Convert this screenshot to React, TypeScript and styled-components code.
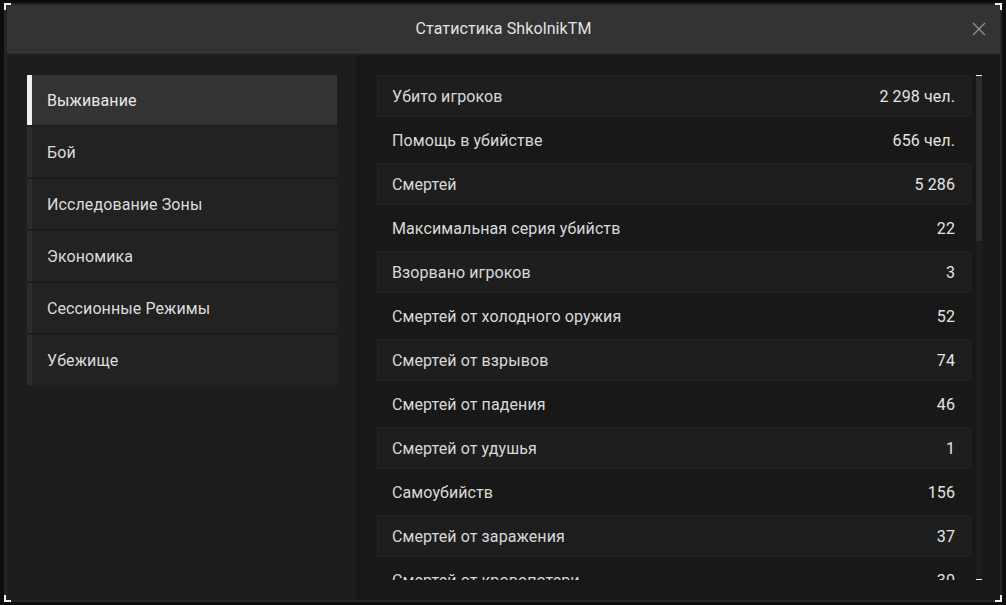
import React from "react";
import styled, { createGlobalStyle } from "styled-components";

const Global = createGlobalStyle`
  html, body { margin: 0; padding: 0; background: #0d0d0d; }
  body { font-family: Roboto, "Noto Sans", sans-serif; -webkit-font-smoothing: antialiased; }
  * { box-sizing: border-box; }
`;

const Page = styled.div`
  width: 1006px;
  height: 605px;
  padding: 3px 4px 3px 4px;
  background: #0d0d0d;
`;

const Frame = styled.div`
  position: relative;
  width: 998px;
  height: 599px;
  border: 2px solid #242424;
  border-left-width: 3px;
  background: #1c1c1c;
  display: flex;
  flex-direction: column;
`;

const Corner = styled.span<{ $pos: "tl" | "tr" | "bl" | "br" }>`
  position: absolute;
  width: 7px;
  height: 7px;
  border-color: #f2f2f2;
  border-style: solid;
  border-width: 0;
  ${(p) =>
    p.$pos === "tl"
      ? "top:-2px;left:-3px;border-top-width:2px;border-left-width:2px;"
      : p.$pos === "tr"
      ? "top:-2px;right:-2px;border-top-width:2px;border-right-width:2px;"
      : p.$pos === "bl"
      ? "bottom:-2px;left:-3px;border-bottom-width:2px;border-left-width:2px;"
      : "bottom:-2px;right:-2px;border-bottom-width:2px;border-right-width:2px;"}
`;

const Header = styled.div`
  position: relative;
  height: 48px;
  flex: none;
  background: #333333;
  border-bottom: 1px solid #3b3b3b;
  box-shadow: 0 2px 0 #262626;
  display: flex;
  align-items: center;
  justify-content: center;
`;

const Title = styled.div`
  color: #e2e2e2;
  font-size: 16px;
  letter-spacing: 0.1px;
`;

const Close = styled.button`
  position: absolute;
  right: 14px;
  top: 17px;
  width: 14px;
  height: 14px;
  padding: 0;
  border: 0;
  background: transparent;
  display: flex;
  cursor: pointer;
`;

const Body = styled.div`
  flex: 1;
  display: flex;
  margin-top: 2px;
  min-height: 0;
`;

const Side = styled.nav`
  width: 349px;
  flex: none;
  background: #1d1d1d;
  padding: 20px 19px 0 20px;
  display: flex;
  flex-direction: column;
  gap: 2px;
`;

const NavItem = styled.div<{ $active?: boolean }>`
  height: 50px;
  display: flex;
  align-items: center;
  padding-left: 15px;
  background: ${(p) => (p.$active ? "#333333" : "#222222")};
  border-left: 5px solid ${(p) => (p.$active ? "#f0f0f0" : "#2c2c2c")};
  color: ${(p) => (p.$active ? "#e8e8e8" : "#dcdcdc")};
  font-size: 16px;
  letter-spacing: 0.1px;
`;

const Main = styled.div`
  flex: 1;
  background: #181818;
  display: flex;
  gap: 5px;
  padding: 20px 17px 20px 21px;
  min-height: 0;
`;

const List = styled.div`
  width: 594px;
  flex: none;
  overflow: hidden;
  display: flex;
  flex-direction: column;
  gap: 2px;
`;

const Row = styled.div<{ $shaded: boolean }>`
  height: 42px;
  flex: none;
  display: flex;
  align-items: center;
  justify-content: space-between;
  padding: 0 15px 0 14px;
  background: ${(p) => (p.$shaded ? "#1e1e1e" : "transparent")};
  border: 1px solid ${(p) => (p.$shaded ? "#242424" : "transparent")};
  font-size: 16px;
  letter-spacing: 0.1px;
`;

const Label = styled.span`
  color: #d9d9d9;
`;

const Value = styled.span`
  color: #e4e4e4;
`;

const Track = styled.div`
  position: relative;
  width: 6px;
  flex: none;
  background: #1d1d1d;
  border-top: 1px solid #f0f0f0;
  border-bottom: 1px solid #f0f0f0;
`;

const Thumb = styled.div`
  width: 6px;
  background: #2d2d2d;
`;

const stats: [string, string][] = [
  ["Убито игроков", "2 298 чел."],
  ["Помощь в убийстве", "656 чел."],
  ["Смертей", "5 286"],
  ["Максимальная серия убийств", "22"],
  ["Взорвано игроков", "3"],
  ["Смертей от холодного оружия", "52"],
  ["Смертей от взрывов", "74"],
  ["Смертей от падения", "46"],
  ["Смертей от удушья", "1"],
  ["Самоубийств", "156"],
  ["Смертей от заражения", "37"],
  ["Смертей от кровопотери", "30"],
];

const sections = [
  "Выживание",
  "Бой",
  "Исследование Зоны",
  "Экономика",
  "Сессионные Режимы",
  "Убежище",
];

export default function App() {
  const thumbHeight = 165;
  return (
    <>
      <Global />
      <Page>
        <Frame>
          <Corner $pos="tl" />
          <Corner $pos="tr" />
          <Corner $pos="bl" />
          <Corner $pos="br" />
          <Header>
            <Title>Статистика ShkolnikTM</Title>
            <Close aria-label="Закрыть">
              <svg width="14" height="14" viewBox="0 0 14 14">
                <path d="M1 1 L13 13 M13 1 L1 13" stroke="#8e8e8e" strokeWidth="1.4" fill="none" />
              </svg>
            </Close>
          </Header>
          <Body>
            <Side>
              {sections.map((s, i) => (
                <NavItem key={s} $active={i === 0}>
                  {s}
                </NavItem>
              ))}
            </Side>
            <Main>
              <List>
                {stats.map(([l, v], i) => (
                  <Row key={l} $shaded={i % 2 === 0}>
                    <Label>{l}</Label>
                    <Value>{v}</Value>
                  </Row>
                ))}
              </List>
              <Track>
                <Thumb style={{ height: thumbHeight }} />
              </Track>
            </Main>
          </Body>
        </Frame>
      </Page>
    </>
  );
}
